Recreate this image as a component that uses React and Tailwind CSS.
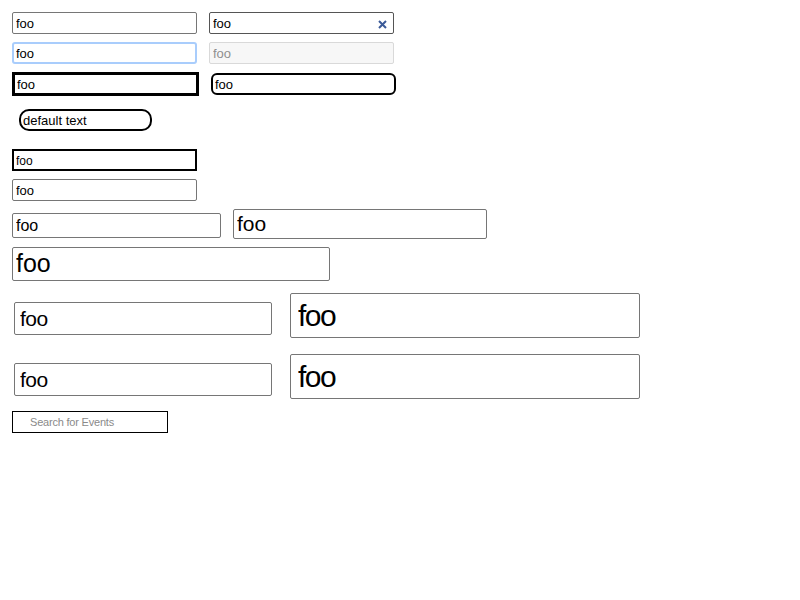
import React from 'react';

const base = "block outline-none font-['Liberation_Sans',Arial,sans-serif]";

function Field({ className, value = 'foo', ...rest }) {
  return <input readOnly defaultValue={value} className={`${base} ${className}`} {...rest} />;
}

export default function App() {
  return (
    <div className="w-[800px] h-[600px] bg-white pt-3 pl-3">
      <div className="flex gap-3">
        <Field className="w-[185px] h-[22px] bg-white text-black border border-[#767676] rounded-[2px] px-[3px] text-[13px]" />
        <div className="w-[185px] h-[22px] border border-[#555] rounded-[2px] flex items-center pl-[3px] pr-[6px]">
          <input readOnly defaultValue="foo" className={`${base} bg-white text-black flex-1 min-w-0 text-[13px] mt-px`} />
          <svg width="9" height="9" viewBox="0 0 9 9" className="mt-[3px]">
            <path d="M1 1 L8 8 M8 1 L1 8" stroke="#3b5a98" strokeWidth="2" />
          </svg>
        </div>
      </div>

      <div className="flex gap-3 mt-2">
        <Field className="w-[185px] h-[22px] bg-white text-black border-2 border-[#a9cdfc] rounded-[3px] px-[2px] text-[13px]" />
        <Field disabled className="w-[185px] h-[22px] border border-[#d9d9d9] rounded-[2px] px-[3px] text-[13px] bg-[#f7f7f7] text-[#8f8f8f]" />
      </div>

      <div className="flex gap-3 mt-2 items-start">
        <Field className="w-[187px] h-[24px] bg-white text-black border-[3px] border-black px-[2px] text-[13px]" />
        <Field className="w-[185px] h-[22px] mt-px bg-white text-black border-2 border-black rounded-[6px] px-[2px] text-[13px]" />
      </div>

      <div className="mt-[13px] pl-[7px]">
        <Field value="default text" className="w-[133px] h-[22px] bg-white text-black border-2 border-black rounded-[10px] px-[2px] text-[13px]" />
      </div>

      <Field className="mt-[18px] w-[185px] h-[22px] bg-white text-black border-2 border-black px-[2px] pt-px text-[12px]" />
      <Field className="mt-2 w-[185px] h-[22px] bg-white text-black border border-[#767676] rounded-[2px] px-[3px] text-[13px]" />

      <div className="flex gap-3 mt-2 items-start">
        <Field className="mt-1 w-[209px] h-[25px] bg-white text-black border border-[#767676] rounded-[2px] px-[3px] text-[16px]" />
        <Field className="w-[254px] h-[30px] bg-white text-black border border-[#767676] rounded-[2px] px-[3px] text-[21px]" />
      </div>

      <Field className="mt-2 w-[318px] h-[34px] bg-white text-black border border-[#767676] rounded-[2px] px-[3px] text-[25px]" />

      <div className="flex gap-[18px] mt-3 pl-[2px] items-start">
        <Field className="mt-[9px] w-[258px] h-[33px] bg-white text-black border border-[#767676] rounded-[2px] px-[5px] text-[21px] tracking-[-0.5px]" />
        <Field className="w-[350px] h-[45px] bg-white text-black border border-[#767676] rounded-[2px] px-[7px] text-[30px] tracking-[-1.5px]" />
      </div>

      <div className="flex gap-[18px] mt-4 pl-[2px] items-start">
        <Field className="mt-[9px] w-[258px] h-[33px] bg-white text-black border border-[#767676] rounded-[2px] px-[5px] text-[21px] tracking-[-0.5px]" />
        <Field className="w-[350px] h-[45px] bg-white text-black border border-[#767676] rounded-[2px] px-[7px] text-[30px] tracking-[-1.5px]" />
      </div>

      <input
        readOnly
        placeholder="Search for Events"
        className={`${base} mt-3 w-[156px] h-[22px] bg-white border border-black pl-[17px] text-[11px] tracking-[-0.2px] placeholder:text-[#8a8a8a]`}
      />
    </div>
  );
}
